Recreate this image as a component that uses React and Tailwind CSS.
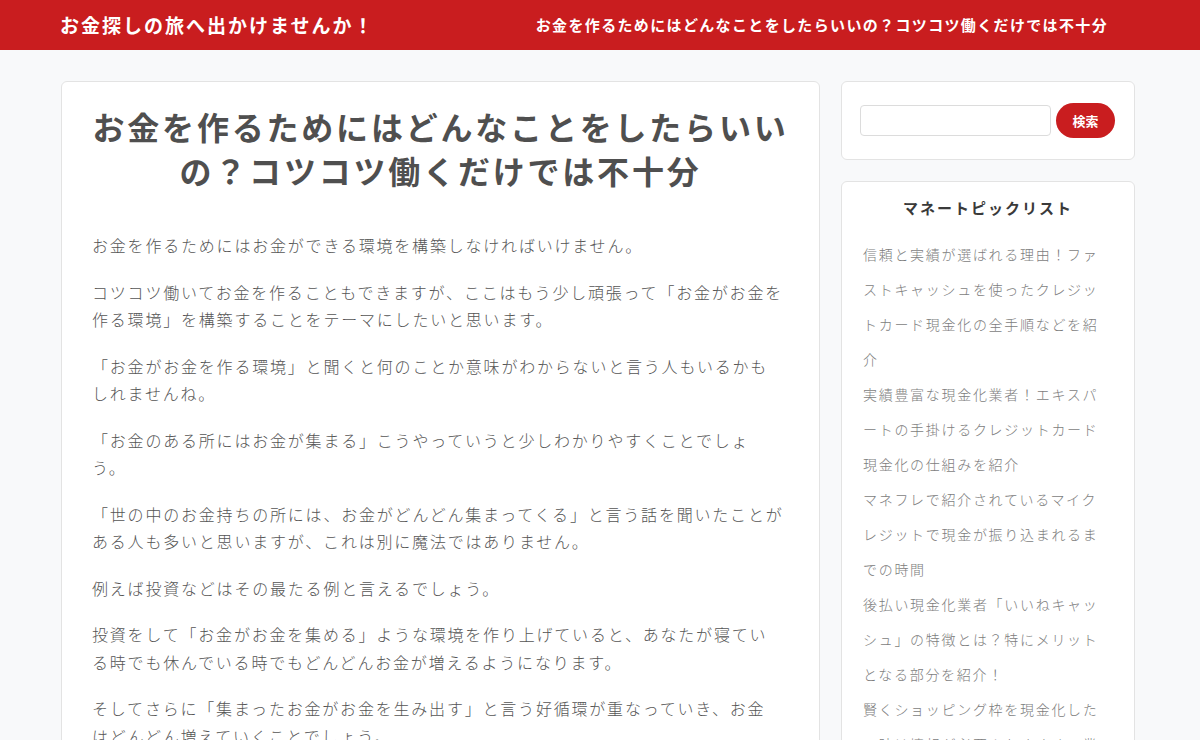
import React from "react";

const jp = { fontFamily: '"Noto Sans CJK JP", "Noto Sans", sans-serif' };

export default function App() {
  const paragraphs = [
    ["お金を作るためにはお金ができる環境を構築しなければいけません。"],
    [
      "コツコツ働いてお金を作ることもできますが、ここはもう少し頑張って「お金がお金を",
      "作る環境」を構築することをテーマにしたいと思います。",
    ],
    [
      "「お金がお金を作る環境」と聞くと何のことか意味がわからないと言う人もいるかも",
      "しれませんね。",
    ],
    ["「お金のある所にはお金が集まる」こうやっていうと少しわかりやすくことでしょ", "う。"],
    [
      "「世の中のお金持ちの所には、お金がどんどん集まってくる」と言う話を聞いたことが",
      "ある人も多いと思いますが、これは別に魔法ではありません。",
    ],
    ["例えば投資などはその最たる例と言えるでしょう。"],
    [
      "投資をして「お金がお金を集める」ような環境を作り上げていると、あなたが寝てい",
      "る時でも休んでいる時でもどんどんお金が増えるようになります。",
    ],
    [
      "そしてさらに「集まったお金がお金を生み出す」と言う好循環が重なっていき、お金",
      "はどんどん増えていくことでしょう。",
    ],
  ];

  const topics = [
    "信頼と実績が選ばれる理由！ファストキャッシュを使ったクレジットカード現金化の全手順などを紹介",
    "実績豊富な現金化業者！エキスパートの手掛けるクレジットカード現金化の仕組みを紹介",
    "マネフレで紹介されているマイクレジットで現金が振り込まれるまでの時間",
    "後払い現金化業者「いいねキャッシュ」の特徴とは？特にメリットとなる部分を紹介！",
    "賢くショッピング枠を現金化したい時は情報が必要！おすすめの業者を紹介",
  ];

  return (
    <div className="min-h-screen bg-[#f8f9fa]" style={jp}>
      {/* Header */}
      <header className="h-[50px] bg-[#c91d1f] flex items-center justify-between pl-[60px] pr-[92px]">
        <h1 className="text-white font-bold text-[19px] tracking-[2px]">
          お金探しの旅へ出かけませんか！
        </h1>
        <nav className="text-white font-bold text-[15px] tracking-[1.35px]">
          お金を作るためにはどんなことをしたらいいの？コツコツ働くだけでは不十分
        </nav>
      </header>

      {/* Body */}
      <div className="flex items-start gap-[21px] pl-[61px] pr-[65px] pt-[31px]">
        {/* Article */}
        <article className="w-[759px] shrink-0 bg-white border border-[#e3e3e3] rounded-md px-[30px] pt-[22px] pb-10">
          <h2 className="text-center font-bold text-[32px] leading-[44px] tracking-[2.8px] text-[#4f4f4f] mb-10">
            お金を作るためにはどんなことをしたらいい
            <br />
            の？コツコツ働くだけでは不十分
          </h2>
          <div className="text-[16px] leading-[27.5px] tracking-[1.8px] text-[#555] font-light">
            {paragraphs.map((lines, i) => (
              <p key={i} className="mb-[19px] whitespace-nowrap">
                {lines.map((line, j) => (
                  <React.Fragment key={j}>
                    {j > 0 && <br />}
                    {line}
                  </React.Fragment>
                ))}
              </p>
            ))}
          </div>
        </article>

        {/* Sidebar */}
        <aside className="flex-1 flex flex-col gap-[21px]">
          <div className="bg-white border border-[#e3e3e3] rounded-md h-[79px] flex items-center gap-[5px] pl-[18px] pr-[19px]">
            <input
              type="text"
              className="w-[191px] h-[31px] border border-[#dcdcdc] rounded-sm bg-white outline-none"
            />
            <button className="h-[35px] w-[59px] rounded-full bg-[#c91d1f] text-white text-[13px] font-bold">
              検索
            </button>
          </div>

          <div className="bg-white border border-[#e3e3e3] rounded-md pl-[21px] pr-[26px] pt-[15px] pb-6">
            <h3 className="text-center pl-[5px] font-bold text-[15px] tracking-[2px] text-[#3a3a3a] leading-[22px] mb-[18px]">
              マネートピックリスト
            </h3>
            <ul className="text-[14px] leading-[35px] tracking-[1.7px] text-[#7d7d7d] font-light">
              {topics.map((t, i) => (
                <li key={i}>{t}</li>
              ))}
            </ul>
          </div>
        </aside>
      </div>
    </div>
  );
}
